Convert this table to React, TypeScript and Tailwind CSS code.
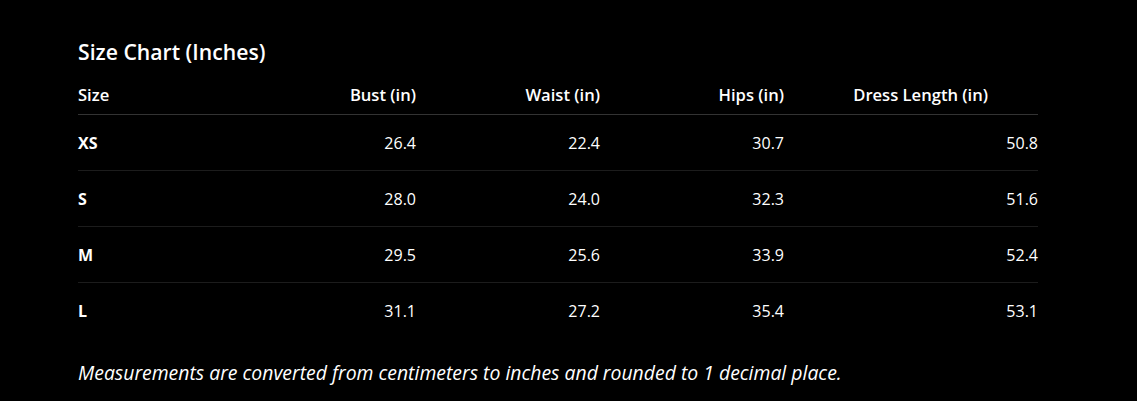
const rows = [
  { size: "XS", bust: "26.4", waist: "22.4", hips: "30.7", length: "50.8" },
  { size: "S", bust: "28.0", waist: "24.0", hips: "32.3", length: "51.6" },
  { size: "M", bust: "29.5", waist: "25.6", hips: "33.9", length: "52.4" },
  { size: "L", bust: "31.1", waist: "27.2", hips: "35.4", length: "53.1" },
];

export default function App() {
  return (
    <div
      className="min-h-[401px] w-full bg-black px-[78px] pt-[38px] text-white"
      style={{ fontFamily: '"Open Sans", "Noto Sans", sans-serif' }}
    >
      <h2 className="text-[21.2px] font-semibold leading-7">Size Chart (Inches)</h2>

      <table className="mt-[9px] w-[960px] table-fixed border-collapse text-[16px]">
        <colgroup>
          <col className="w-[154px]" />
          <col className="w-[184px]" />
          <col className="w-[184px]" />
          <col className="w-[184px]" />
          <col className="w-[254px]" />
        </colgroup>
        <thead className="text-[16.6px]">
          <tr className="border-b border-[#333333]">
            <th className="pt-2 pb-[7px] text-left font-semibold leading-6">Size</th>
            <th className="pt-2 pb-[7px] text-right font-semibold leading-6">Bust (in)</th>
            <th className="pt-2 pb-[7px] text-right font-semibold leading-6">Waist (in)</th>
            <th className="pt-2 pb-[7px] text-right font-semibold leading-6">Hips (in)</th>
            <th className="pt-2 pb-[7px] pr-[50px] text-right font-semibold leading-6">
              Dress Length (in)
            </th>
          </tr>
        </thead>
        <tbody>
          {rows.map((r, i) => (
            <tr
              key={r.size}
              className={i < rows.length - 1 ? "border-b border-[#1c1c1c]" : ""}
            >
              <td className="pt-4 pb-[15px] text-left font-bold leading-6">{r.size}</td>
              <td className="pt-4 pb-[15px] text-right leading-6">{r.bust}</td>
              <td className="pt-4 pb-[15px] text-right leading-6">{r.waist}</td>
              <td className="pt-4 pb-[15px] text-right leading-6">{r.hips}</td>
              <td className="pt-4 pb-[15px] text-right leading-6">{r.length}</td>
            </tr>
          ))}
        </tbody>
      </table>

      <p className="mt-[21px] text-[19.4px] italic leading-7">
        Measurements are converted from centimeters to inches and rounded to 1 decimal place.
      </p>
    </div>
  );
}
